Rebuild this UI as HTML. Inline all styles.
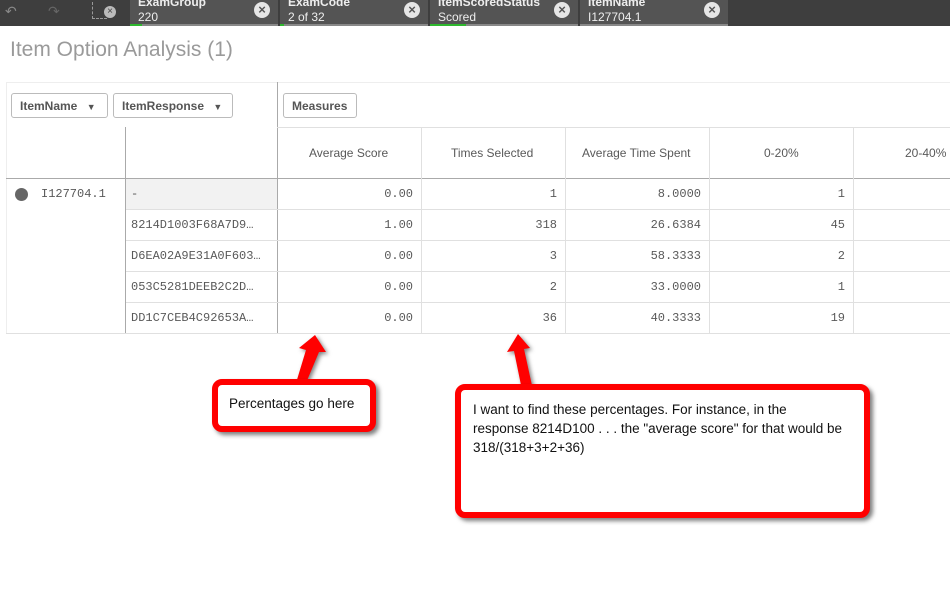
<!DOCTYPE html><html><head><style>
body{margin:0;width:950px;height:593px;background:#fff;position:relative;overflow:hidden;font-family:"Liberation Sans",sans-serif}
.bar{position:absolute;left:0;top:0;width:950px;height:26px;background:#3e3e3e}
.tab{position:absolute;top:0;height:26px;background:#545454;color:#eee;font-size:12px}
.tab b{position:absolute;left:8px;top:-5px;font-size:12px}
.tab span{position:absolute;left:8px;top:10px;font-size:12px}
.tab i{position:absolute;right:8px;top:2px;width:16px;height:16px;border-radius:50%;background:#e6e6e6;color:#545454;font-style:normal;font-size:13px;font-weight:bold;text-align:center;line-height:16px}
.tab u{position:absolute;left:0;bottom:0;height:2px;width:100%;background:#888;text-decoration:none}
.tab u:before{content:"";position:absolute;left:0;top:0;height:2px;background:#2eb82e;width:var(--g)}
.t{position:absolute;font-size:12px;color:#595959}
.m{font-family:"Liberation Mono",monospace;font-size:12px;color:#595959;position:absolute}
.h{position:absolute;background:#e0e0e0;height:1px}
.v{position:absolute;background:#e0e0e0;width:1px}
.btn{position:absolute;top:93px;height:25px;border:1px solid #bbb;border-radius:3px;font-size:12px;font-weight:bold;color:#555;line-height:25px;padding-left:8px;box-sizing:border-box}
.call{position:absolute;border:6px solid #f00;border-radius:10px;background:#fff;box-shadow:3px 3px 4px rgba(0,0,0,.5);font-family:"Liberation Sans",sans-serif;font-size:13.5px;color:#111;box-sizing:border-box;white-space:nowrap}
</style></head><body>
<div class="bar"></div>
<div style="position:absolute;left:5px;top:3px;color:#888;font-size:14px">↶</div>
<div style="position:absolute;left:48px;top:3px;color:#666;font-size:14px">↷</div>
<div style="position:absolute;left:92px;top:2px;width:14px;height:16px;border-left:1px dashed #999;border-bottom:1px dashed #999"></div>
<div style="position:absolute;left:104px;top:6px;width:12px;height:12px;border-radius:50%;background:#bbb;color:#444;font-size:10px;text-align:center;line-height:12px">×</div>
<div class="tab" style="left:130px;width:148px"><b>ExamGroup</b><span>220</span><i>×</i><u style="--g:12px"></u></div>
<div class="tab" style="left:280px;width:148px"><b>ExamCode</b><span>2 of 32</span><i>×</i><u style="--g:4px"></u></div>
<div class="tab" style="left:430px;width:148px"><b>ItemScoredStatus</b><span>Scored</span><i>×</i><u style="--g:36px"></u></div>
<div class="tab" style="left:580px;width:148px"><b>ItemName</b><span>I127704.1</span><i>×</i><u style="--g:0px;background:#888"></u></div>
<div style="position:absolute;left:10px;top:38px;font-size:21px;color:#9a9a9a">Item Option Analysis (1)</div>
<div class="h" style="left:6px;top:82px;width:944px;background:#eee"></div>
<div class="v" style="left:6px;top:82px;height:251px;background:#eee"></div>
<div class="btn" style="left:11px;width:97px">ItemName <span style="font-size:9px;margin-left:6px">▼</span></div>
<div class="btn" style="left:113px;width:120px">ItemResponse <span style="font-size:9px;margin-left:6px">▼</span></div>
<div class="btn" style="left:283px;width:74px">Measures</div>
<div class="v" style="left:277px;top:82px;height:251px;background:#aaa"></div>
<div class="v" style="left:125px;top:127px;height:206px;background:#aaa"></div>
<div class="h" style="left:277px;top:127px;width:673px"></div>
<div class="h" style="left:6px;top:178px;width:944px;background:#aaa"></div>
<div class="v" style="left:421px;top:127px;height:206px"></div>
<div class="v" style="left:565px;top:127px;height:206px"></div>
<div class="v" style="left:709px;top:127px;height:206px"></div>
<div class="v" style="left:853px;top:127px;height:206px"></div>
<div style="position:absolute;left:126px;top:179px;width:151px;height:30px;background:#f2f2f2"></div>
<div class="h" style="left:126px;top:209px;width:824px"></div>
<div class="h" style="left:126px;top:240px;width:824px"></div>
<div class="h" style="left:126px;top:271px;width:824px"></div>
<div class="h" style="left:126px;top:302px;width:824px"></div>
<div class="h" style="left:6px;top:333px;width:944px"></div>
<div class="t" style="left:309px;top:146px">Average Score</div>
<div class="t" style="left:451px;top:146px">Times Selected</div>
<div class="t" style="left:582px;top:146px">Average Time Spent</div>
<div class="t" style="left:764px;top:146px">0-20%</div>
<div class="t" style="left:905px;top:146px">20-40%</div>
<div style="position:absolute;left:15px;top:188px;width:13px;height:13px;border-radius:50%;background:#666"></div>
<div class="m" style="left:41px;top:187px">I127704.1</div>
<div class="m" style="left:131px;top:187px">-</div>
<div class="m" style="left:131px;top:218px">8214D1003F68A7D9…</div>
<div class="m" style="left:131px;top:249px">D6EA02A9E31A0F603…</div>
<div class="m" style="left:131px;top:280px">053C5281DEEB2C2D…</div>
<div class="m" style="left:131px;top:311px">DD1C7CEB4C92653A…</div>
<div class="m" style="right:537px;top:187px">0.00</div><div class="m" style="right:393px;top:187px">1</div><div class="m" style="right:249px;top:187px">8.0000</div><div class="m" style="right:105px;top:187px">1</div>
<div class="m" style="right:537px;top:218px">1.00</div><div class="m" style="right:393px;top:218px">318</div><div class="m" style="right:249px;top:218px">26.6384</div><div class="m" style="right:105px;top:218px">45</div>
<div class="m" style="right:537px;top:249px">0.00</div><div class="m" style="right:393px;top:249px">3</div><div class="m" style="right:249px;top:249px">58.3333</div><div class="m" style="right:105px;top:249px">2</div>
<div class="m" style="right:537px;top:280px">0.00</div><div class="m" style="right:393px;top:280px">2</div><div class="m" style="right:249px;top:280px">33.0000</div><div class="m" style="right:105px;top:280px">1</div>
<div class="m" style="right:537px;top:311px">0.00</div><div class="m" style="right:393px;top:311px">36</div><div class="m" style="right:249px;top:311px">40.3333</div><div class="m" style="right:105px;top:311px">19</div>
<svg style="position:absolute;left:0;top:0" width="950" height="593"><g fill="#f00" style="filter:drop-shadow(2px 2px 2px rgba(0,0,0,.5))">
<polygon points="315,335 326,352 319,352 306,383 296,383 306,350 299,348"/>
<polygon points="518,334 530,348 524,349 533,390 522,390 514,351 507,352"/></g></svg>
<div class="call" style="left:212px;top:379px;width:164px;height:53px;padding:11px 0 0 11px">Percentages go here</div>
<div class="call" style="left:455px;top:384px;width:415px;height:134px;padding:10px 0 0 12px;line-height:19px">I want to find these percentages. For instance, in the<br>response 8214D100 . . . the "average score" for that would be<br>318/(318+3+2+36)</div>
</body></html>
